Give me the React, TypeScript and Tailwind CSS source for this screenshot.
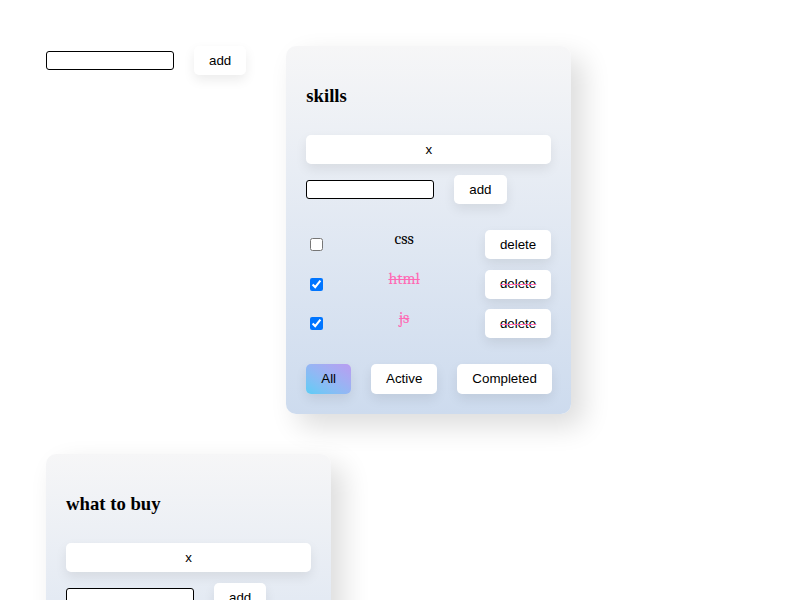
import { useState } from "react";

type Todo = { id: number; title: string; done: boolean };
type Filter = "all" | "active" | "completed";

const btn =
  "h-[29px] rounded-[5px] bg-white px-[15px] text-[13.33px] text-black shadow-[0_5px_12px_rgba(0,0,0,0.08)] font-['Liberation_Sans',Arial,sans-serif]";

function AddRow({ onAdd }: { onAdd?: (t: string) => void }) {
  const [text, setText] = useState("");
  return (
    <div className="flex items-center gap-5">
      <input
        value={text}
        onChange={(e) => setText(e.target.value)}
        className="h-[19px] w-[128px] rounded-[3px] border border-black bg-white px-1 text-[13px]"
      />
      <button
        className={btn}
        onClick={() => {
          if (text.trim()) onAdd?.(text.trim());
          setText("");
        }}
      >
        add
      </button>
    </div>
  );
}

function TodoCard({ title, initial }: { title: string; initial: Todo[] }) {
  const [todos, setTodos] = useState(initial);
  const [filter, setFilter] = useState<Filter>("all");

  const shown = todos.filter((t) =>
    filter === "active" ? !t.done : filter === "completed" ? t.done : true
  );

  const filterBtn = (f: Filter, label: string) => (
    <button
      onClick={() => setFilter(f)}
      className={
        filter === f
          ? "h-[30px] rounded-[5px] bg-linear-to-tr from-[#58cdf6] to-[#b99cf1] px-[15px] text-[13.33px] text-black shadow-[0_5px_12px_rgba(0,0,0,0.08)] font-['Liberation_Sans',Arial,sans-serif]"
          : btn + " h-[30px]"
      }
    >
      {label}
    </button>
  );

  return (
    <div className="w-[285px] rounded-[10px] bg-linear-to-b from-[#f6f6f7] to-[#cddbee] px-5 pt-[39px] pb-[20px] shadow-[12px_12px_28px_rgba(0,0,0,0.14)]">
      <h3 className="mb-[28px] text-[18.72px] leading-[22px] font-bold text-black font-['Liberation_Serif','Times_New_Roman',serif]">
        {title}
      </h3>
      <button className={btn + " w-full"}>x</button>
      <div className="mt-[11px]">
        <AddRow
          onAdd={(t) =>
            setTodos((p) => [...p, { id: Date.now(), title: t, done: false }])
          }
        />
      </div>
      <ul className="mt-[26px] flex flex-col gap-[10.5px] font-serif">
        {shown.map((t) => (
          <li key={t.id} className="flex items-center">
            <input
              type="checkbox"
              checked={t.done}
              onChange={() =>
                setTodos((p) =>
                  p.map((x) => (x.id === t.id ? { ...x, done: !x.done } : x))
                )
              }
              className="ml-[4px] h-[13px] w-[13px]"
            />
            <span
              className={
                t.done
                  ? "flex-1 self-start text-center font-serif text-[16px] leading-[18px] text-[#ff69b4] line-through"
                  : "flex-1 self-start text-center font-serif text-[16px] leading-[18px] text-black"
              }
            >
              {t.title}
            </span>
            <button
              onClick={() => setTodos((p) => p.filter((x) => x.id !== t.id))}
              className={
                t.done
                  ? btn + " [text-decoration-line:line-through] [text-decoration-color:#ff69b4] [text-decoration-thickness:1px]"
                  : btn
              }
            >
              delete
            </button>
          </li>
        ))}
      </ul>
      <div className="mt-[26px] flex gap-5">
        {filterBtn("all", "All")}
        {filterBtn("active", "Active")}
        {filterBtn("completed", "Completed")}
      </div>
    </div>
  );
}

export default function App() {
  return (
    <div className="flex min-h-[600px] flex-wrap items-start gap-10 bg-white px-[46px] pt-[46px] pb-10">
      <AddRow />
      <TodoCard
        title="skills"
        initial={[
          { id: 1, title: "css", done: false },
          { id: 2, title: "html", done: true },
          { id: 3, title: "js", done: true },
        ]}
      />
      <TodoCard
        title="what to buy"
        initial={[
          { id: 4, title: "milk", done: false },
          { id: 5, title: "bread", done: false },
        ]}
      />
    </div>
  );
}
